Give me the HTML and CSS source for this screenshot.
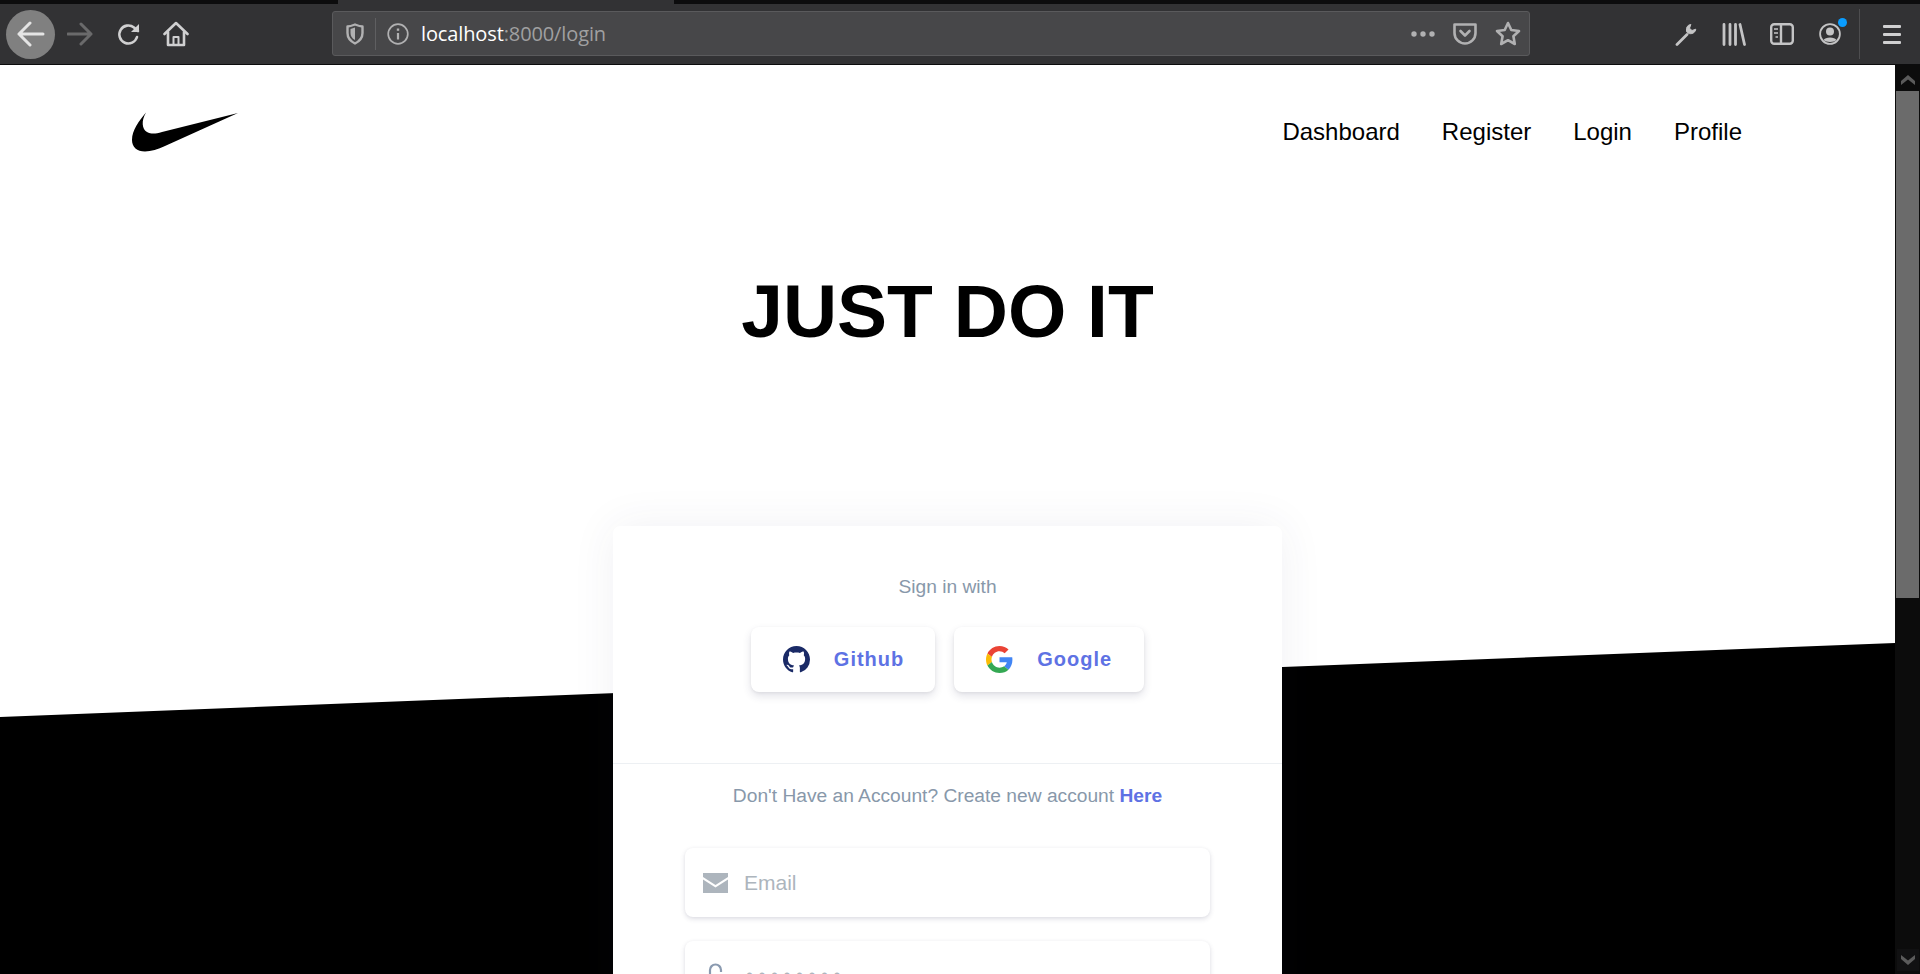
FILE: index.html
```html
<!DOCTYPE html>
<html>
<head>
  <meta charset="UTF-8">
  <title>Login</title>
  <link rel="stylesheet" href="styles.css">
</head>
<body>
  <div class="tabstrip"><div class="tab"></div></div>

  <div class="toolbar">
    <div class="nav-buttons">
      <span class="back-btn">
        <svg width="28" height="26" viewBox="0 0 28 26" fill="none" stroke="#e4e4e4" stroke-width="3" stroke-linecap="round" stroke-linejoin="round"><path d="M2 13H26M13 2L2 13L13 24"/></svg>
      </span>
      <svg class="fwd" width="26" height="24" viewBox="0 0 26 24" fill="none" stroke="#6a6a6b" stroke-width="3" stroke-linecap="round" stroke-linejoin="round"><path d="M1 12H24M14 2L24 12L14 22"/></svg>
      <svg class="reload" width="24" height="24" viewBox="0 0 24 24" fill="none" stroke="#d0d0d1" stroke-width="2.6" stroke-linecap="round"><path d="M20 15A9 9 0 1 1 17 5.5L21 9"/><path d="M22 2V10H14" fill="#d0d0d1" stroke="none"/></svg>
      <svg class="home" width="26" height="26" viewBox="0 0 26 26" fill="none" stroke="#d0d0d1" stroke-width="2.6" stroke-linejoin="round" stroke-linecap="round"><path d="M1.5 13L13 2L24.5 13"/><path d="M5 11V24H21V11"/><path d="M10.5 24V16H15.5V24" stroke-width="2"/></svg>
    </div>

    <div class="urlbar">
      <svg width="18" height="22" viewBox="0 0 18 22" fill="none" stroke="#b1b1b2" stroke-width="2.4" stroke-linejoin="round"><path d="M1.5 3.5C4 3.5 6.5 2.5 9 1.5C11.5 2.5 14 3.5 16.5 3.5V10C16.5 15 13 18.5 9 20.5C5 18.5 1.5 15 1.5 10Z"/><path d="M9 4.5V17C6 15.5 4.5 13 4.5 10V6Z" fill="#b1b1b2" stroke="none"/></svg>
      <span class="url-sep"></span>
      <svg width="22" height="22" viewBox="0 0 22 22" fill="none" stroke="#b1b1b2" stroke-width="1.7"><circle cx="11" cy="11" r="9.8"/><path d="M11 10V16.5" stroke-width="2.2"/><path d="M11 5.5V7.8" stroke-width="2.4"/></svg>
      <span class="url-text">localhost<span class="url-rest">:8000/login</span></span>
      <span class="url-actions">
        <svg width="24" height="6" viewBox="0 0 24 6" fill="#b1b1b2"><circle cx="3" cy="3" r="2.7"/><circle cx="12" cy="3" r="2.7"/><circle cx="21" cy="3" r="2.7"/></svg>
        <svg width="24" height="22" viewBox="0 0 24 22" fill="none" stroke="#b1b1b2" stroke-width="2.6" stroke-linecap="round" stroke-linejoin="round"><path d="M1.5 1.5H22.5V10A10.5 10.5 0 0 1 1.5 10Z"/><path d="M7.5 8L12 12.5L16.5 8"/></svg>
        <svg width="26" height="25" viewBox="0 0 26 25" fill="none" stroke="#b1b1b2" stroke-width="2.6" stroke-linejoin="round"><path d="M13 2L16.3 9L24 10L18.4 15.3L19.8 23L13 19.2L6.2 23L7.6 15.3L2 10L9.7 9Z"/></svg>
      </span>
    </div>

    <div class="tool-icons">
      <svg width="22" height="23" viewBox="0 0 22 23" fill="none" stroke="#c4c4c5" stroke-width="2.8" stroke-linecap="round"><path d="M2 21.5L12 11.5"/><path d="M15.5 1.5C12.5 2 11 4.5 11.5 8C12 11 16.5 11.5 19 9.5C20 8.7 20.6 7.5 20.8 6.2L17 7.5L14.8 5.5Z" fill="#c4c4c5" stroke-width="1"/></svg>
      <svg width="24" height="23" viewBox="0 0 24 23" fill="none" stroke="#c4c4c5" stroke-width="2.8" stroke-linecap="round"><path d="M2 1.5V21.5M8 1.5V21.5M13.5 1.5V21.5M18 1.5L22.5 21.5"/></svg>
      <svg width="24" height="22" viewBox="0 0 24 22" fill="none" stroke="#c4c4c5" stroke-width="2.4"><rect x="1.2" y="1.2" width="21.6" height="19.6" rx="3"/><path d="M11 1.5V20.5"/><path d="M4 6H8M4 10H8M5.5 14H8" stroke-width="1.7"/></svg>
      <span class="profile-icon">
        <svg width="22" height="22" viewBox="0 0 22 22" fill="none" stroke="#c4c4c5" stroke-width="1.8"><circle cx="11" cy="11" r="9.9"/><circle cx="11" cy="8.5" r="4" fill="#c4c4c5" stroke="none"/><path d="M4.5 17C6 13.6 16 13.6 17.5 17C15 19.5 7 19.5 4.5 17Z" fill="#c4c4c5" stroke="none"/></svg>
        <span class="blue-dot"></span>
      </span>
      <span class="tool-sep"></span>
      <span class="menu-icon"><span></span><span></span><span></span></span>
    </div>
  </div>

  <div class="viewport">
    <div class="page">
      <div class="black-band"></div>

      <div class="topnav">
        <svg class="swoosh" width="107" height="40" viewBox="0 0 107 40"><path d="M15 0.5C8 9 1 18 1 28C1 35 6 39.5 14 39.5C20 39.5 27 37 34 34L107 1L31 20C24 22 20 22 16 20C11 17 10 9 15 0.5Z"/></svg>
        <div class="nav-links">
          <a>Dashboard</a>
          <a>Register</a>
          <a>Login</a>
          <a>Profile</a>
        </div>
      </div>

      <h1 class="title">JUST DO IT</h1>

      <div class="card">
        <div class="card-top">
          <p class="muted">Sign in with</p>
          <div class="social-row">
            <button class="social-btn">
              <svg width="27" height="27" viewBox="0 0 16 16" fill="#1a2a66"><path d="M8 0C3.58 0 0 3.58 0 8c0 3.54 2.29 6.53 5.47 7.59.4.07.55-.17.55-.38 0-.19-.01-.82-.01-1.49-2.01.37-2.53-.49-2.69-.94-.09-.23-.48-.94-.82-1.13-.28-.15-.68-.52-.01-.53.63-.01 1.08.58 1.23.82.72 1.21 1.87.87 2.33.66.07-.52.28-.87.51-1.07-1.78-.2-3.64-.89-3.64-3.95 0-.87.31-1.59.82-2.15-.08-.2-.36-1.02.08-2.12 0 0 .67-.21 2.2.82.64-.18 1.32-.27 2-.27.68 0 1.36.09 2 .27 1.53-1.04 2.2-.82 2.2-.82.44 1.1.16 1.92.08 2.12.51.56.82 1.27.82 2.15 0 3.07-1.87 3.75-3.65 3.95.29.25.54.73.54 1.48 0 1.07-.01 1.93-.01 2.2 0 .21.15.46.55.38A8.013 8.013 0 0016 8c0-4.42-3.58-8-8-8z"/></svg>
              Github
            </button>
            <button class="social-btn">
              <svg width="27" height="27" viewBox="0 0 48 48"><path fill="#EA4335" d="M24 9.5c3.54 0 6.71 1.22 9.21 3.6l6.85-6.85C35.9 2.38 30.47 0 24 0 14.62 0 6.51 5.38 2.56 13.22l7.98 6.19C12.43 13.72 17.74 9.5 24 9.5z"/><path fill="#4285F4" d="M46.98 24.55c0-1.57-.15-3.09-.38-4.55H24v9.02h12.94c-.58 2.96-2.26 5.48-4.78 7.18l7.73 6c4.51-4.18 7.09-10.36 7.09-17.65z"/><path fill="#FBBC05" d="M10.53 28.59c-.5-1.45-.78-2.99-.78-4.59s.27-3.14.78-4.59l-7.98-6.19C.92 16.46 0 20.12 0 24c0 3.88.92 7.54 2.56 10.78l7.97-6.19z"/><path fill="#34A853" d="M24 48c6.48 0 11.93-2.13 15.89-5.81l-7.73-6c-2.15 1.45-4.92 2.3-8.16 2.3-6.26 0-11.57-4.22-13.47-9.91l-7.98 6.19C6.51 42.62 14.62 48 24 48z"/></svg>
              Google
            </button>
          </div>
        </div>
        <div class="card-bottom">
          <p class="muted">Don't Have an Account? Create new account <a class="here">Here</a></p>
          <div class="field">
            <svg width="25" height="20" viewBox="0 0 25 20" fill="#adb5bd"><path d="M0 0H25V4L12.5 12L0 4Z"/><path d="M0 6.5L12.5 14.5L25 6.5V20H0Z"/></svg>
            <input type="text" placeholder="Email">
          </div>
          <div class="field">
            <svg width="25" height="30" viewBox="0 0 25 30" fill="none" stroke="#8a9ab0" stroke-width="2.2"><path d="M7 16V9A5.5 5.5 0 0 1 18 9V11"/></svg>
            <input class="pass" type="text" placeholder="••••••••">
          </div>
        </div>
      </div>
    </div>

    <div class="scrollbar">
      <svg class="sb-up" width="14" height="10" viewBox="0 0 14 10" fill="#5b5b5b"><path d="M7 0L14 6V10L7 4.5L0 10V6Z"/></svg>
      <div class="sb-thumb"></div>
      <div class="sb-down"><svg width="14" height="10" viewBox="0 0 14 10" fill="#5b5b5b"><path d="M7 10L14 4V0L7 5.5L0 0V4Z"/></svg></div>
    </div>
  </div>
</body>
</html>
```

FILE: styles.css
```css
* {
  box-sizing: border-box;
}

html, body {
  height: 100%;
}

body {
  margin: 0;
  overflow: hidden;
  display: flex;
  flex-direction: column;
  font-family: "Liberation Sans", Arial, sans-serif;
  background-color: #fff;
}

.tabstrip {
  height: 4px;
  background-color: #0c0c0d;
  padding-left: 338px;
}

.tab {
  width: 336px;
  height: 4px;
  background-color: #323234;
}

.toolbar {
  height: 61px;
  display: flex;
  align-items: center;
  background-color: #323234;
  border-bottom: 1px solid #0c0c0d;
  position: relative;
}

.nav-buttons {
  display: flex;
  align-items: center;
  width: 332px;
  padding-left: 6px;
}

.back-btn {
  width: 49px;
  height: 49px;
  border-radius: 50%;
  background-color: #808080;
  display: flex;
  align-items: center;
  justify-content: center;
}

.fwd {
  margin-left: 12px;
}

.reload {
  margin-left: 24px;
}

.home {
  margin-left: 22px;
}

.urlbar {
  width: 1198px;
  height: 45px;
  margin-top: -1px;
  display: flex;
  align-items: center;
  padding-left: 13px;
  padding-right: 8px;
  background-color: #474749;
  border: 1px solid #5a5a5c;
  border-radius: 3px;
}

.url-sep {
  width: 1px;
  height: 32px;
  margin: 0 11px;
  background-color: #5f5f61;
}

.url-text {
  margin-left: 12px;
  font-family: "Open Sans", sans-serif;
  font-size: 20px;
  letter-spacing: -0.12px;
  color: #fff;
}

.url-rest {
  color: #a0a0a1;
}

.url-actions {
  margin-left: auto;
  display: flex;
  align-items: center;
  gap: 18px;
}

.tool-icons {
  flex: 1;
  display: flex;
  align-items: center;
  padding-left: 145px;
}

.tool-icons svg {
  display: block;
}

.tool-icons > svg {
  margin-right: 24.5px;
}

.profile-icon {
  position: relative;
}

.blue-dot {
  position: absolute;
  top: -5px;
  right: -6px;
  width: 9px;
  height: 9px;
  border-radius: 50%;
  background-color: #0a9dff;
}

.tool-sep {
  width: 1px;
  height: 50px;
  margin-left: 18px;
  background-color: #4d4d4f;
}

.menu-icon {
  display: flex;
  flex-direction: column;
  gap: 5px;
  margin-left: 23px;
}

.menu-icon span {
  width: 18px;
  height: 3px;
  border-radius: 1px;
  background-color: #d0d0d1;
}

.viewport {
  flex: 1;
  min-height: 0;
  display: flex;
}

.page {
  flex: 1;
  position: relative;
  overflow: hidden;
  background-color: #fff;
}

.black-band {
  position: absolute;
  left: 0;
  right: 0;
  bottom: 0;
  top: 578px;
  background-color: #000;
  clip-path: polygon(0 74px, 100% 0, 100% 100%, 0 100%);
}

.topnav {
  position: relative;
  display: flex;
  justify-content: space-between;
  padding: 47px 153px 0 131px;
}

.swoosh {
  fill: #000;
}

.nav-links {
  display: flex;
  gap: 42px;
  margin-top: 6px;
  font-size: 24px;
  line-height: 28px;
  color: #000;
}

.title {
  position: relative;
  margin: 116px 0 0;
  text-align: center;
  font-size: 75px;
  line-height: 86px;
  font-weight: 700;
  color: #000;
}

.card {
  position: relative;
  width: 669px;
  margin: 172px auto 0;
  background-color: #fff;
  border-radius: 7px;
  box-shadow: 0 0 45px rgba(50, 50, 93, 0.07);
}

.card-top {
  padding: 48px 0 71px;
  border-bottom: 1px solid #edf0f3;
  text-align: center;
}

.muted {
  margin: 0;
  font-size: 19.2px;
  line-height: 26px;
  color: #8898aa;
}

.social-row {
  display: flex;
  justify-content: center;
  gap: 19px;
  margin-top: 27px;
}

.social-btn {
  display: flex;
  align-items: center;
  gap: 24px;
  height: 65px;
  padding: 0 31px 0 32px;
  border: none;
  border-radius: 8px;
  background-color: #fff;
  box-shadow: 0 4px 8px rgba(50, 50, 93, 0.14), 0 1px 3px rgba(0, 0, 0, 0.06);
  font-family: inherit;
  font-size: 20px;
  font-weight: 700;
  letter-spacing: 1px;
  color: #5e72e4;
}

.social-btn:last-child {
  padding-right: 32px;
}

.card-bottom {
  padding: 19px 72px 0;
  text-align: center;
}

.here {
  font-weight: 700;
  color: #5e72e4;
}

.field {
  display: flex;
  align-items: center;
  gap: 16px;
  height: 69px;
  margin-top: 39px;
  padding-left: 18px;
  background-color: #fff;
  border-radius: 8px;
  box-shadow: 0 2px 5px rgba(50, 50, 93, 0.16), 0 0 3px rgba(0, 0, 0, 0.03);
}

.field + .field {
  margin-top: 24px;
}

.field input {
  flex: 1;
  min-width: 0;
  border: none;
  outline: none;
  padding: 0;
  background: none;
  font-family: inherit;
  font-size: 21px;
  color: #333;
}

.field input::placeholder {
  color: #adb5bd;
  opacity: 1;
}

.field input.pass {
  font-size: 20px;
  letter-spacing: 5.5px;
  text-indent: 2px;
}

.scrollbar {
  width: 25px;
  display: flex;
  flex-direction: column;
  align-items: center;
  background-color: #0c0c0c;
}

.sb-up {
  margin-top: 10px;
  margin-bottom: 6px;
}

.sb-thumb {
  width: 23px;
  height: 507px;
  background-color: #6b6b6b;
}

.sb-down {
  margin-top: auto;
  margin-bottom: 3px;
  width: 22px;
  height: 22px;
  display: flex;
  align-items: center;
  justify-content: center;
  background-color: #111112;
}
```
